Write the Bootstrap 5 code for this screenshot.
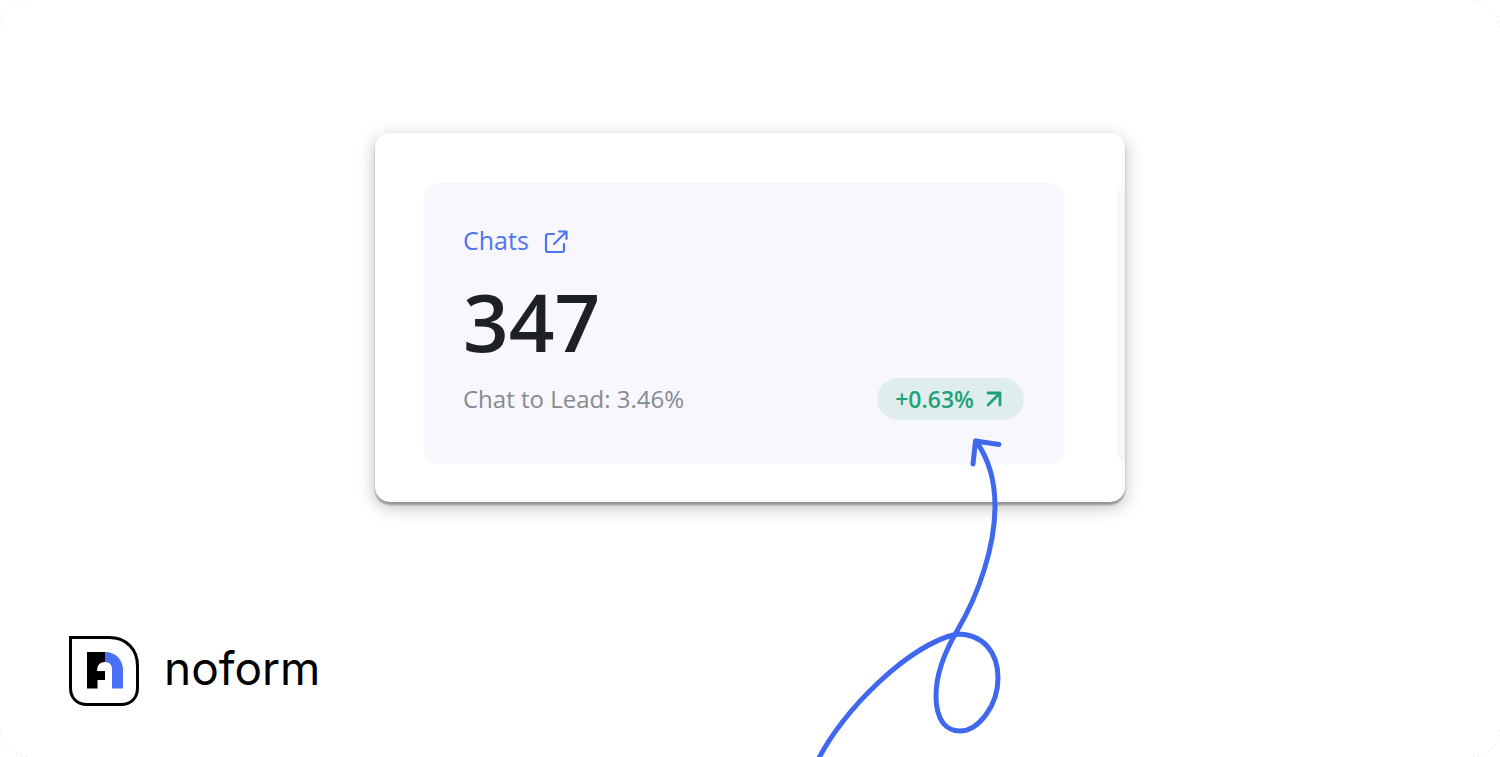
<!DOCTYPE html>
<html lang="en">
<head>
<meta charset="utf-8">
<meta name="viewport" content="width=device-width, initial-scale=1">
<title>noform – Chats</title>
<link href="https://cdn.jsdelivr.net/npm/bootstrap@5.3.0/dist/css/bootstrap.min.css" rel="stylesheet">
<style>
  body { font-family: "Open Sans", "Noto Sans", sans-serif; background: #fff; }
  .stage { padding-top: 133px; padding-bottom: 51px; }
  .panel { border-radius: 15px; padding: 50px 0 38px 49px; gap: 53px;
    box-shadow: 0 3px 2px rgba(0,0,0,.3), 0 5px 18px rgba(0,0,0,.26); }
  .tile { background: #f8f7fd; border-radius: 12px; padding: 37px 40px 43px 39px; min-height: 281px; }
  .tile-main { flex: 0 0 calc(100% - 61px); }
  .chats { color: #4f74f4; font-size: 25px; line-height: 40px; gap: 15px; }
  .count { color: #1d2124; font-size: 80px; line-height: 90px; font-weight: 600; }
  .tile-foot { margin-top: 12px; }
  .ratio-text { color: #868a90; font-size: 24px; line-height: 42px; }
  .trend { background: #dfeeec; color: #22a179; font-size: 23px; line-height: 42px; font-weight: 600; padding: 0 22px 0 18px; gap: 12px; }
  .brand { gap: 25px; padding-left: 69px; }
  .brand-name { font-family: Inter, "Open Sans", sans-serif; font-size: 46px; line-height: 60px; padding-bottom: 6px; color: #000; }
  .squiggle { left: 54%; bottom: 0; pointer-events: none; }
  .edge { width: 27px; height: 27px; }
</style>
</head>
<body>
<main class="stage position-relative min-vh-100 d-flex flex-column overflow-hidden">
  <section class="panel w-50 mx-auto d-flex overflow-hidden bg-white">
    <article class="tile tile-main d-flex flex-column">
      <a class="chats d-flex align-items-center text-decoration-none align-self-start" href="#chats">
        <span>Chats</span>
        <svg class="mt-1" width="24" height="24" viewBox="0 0 24 24" fill="none" stroke="currentColor" stroke-width="2.200" stroke-linecap="round" stroke-linejoin="round" aria-hidden="true"><path d="M10 4H4Q2 4 2 6v14Q2 22 4 22h14Q20 22 20 20v-6M15 1.500h7.500V9M22 2 10 14"/></svg>
      </a>
      <div class="count mt-3">347</div>
      <div class="tile-foot d-flex justify-content-between">
        <span class="ratio-text">Chat to Lead: 3.46%</span>
        <span class="trend rounded-pill d-flex align-items-center">
          <span>+0.63%</span>
          <svg width="16" height="16" viewBox="0 0 16 16" fill="none" stroke="currentColor" stroke-width="2.800" stroke-linecap="round" stroke-linejoin="round" aria-hidden="true"><path d="M2 2h12v12M14 2 2 14"/></svg>
        </span>
      </div>
    </article>
    <div class="tile flex-shrink-0" aria-hidden="true"></div>
  </section>

  <footer class="brand d-flex align-items-center mt-auto">
    <svg width="70" height="70" viewBox="0 0 70 70" aria-hidden="true">
      <path d="M1.500 1.500H40C57 1.500 68.500 13 68.500 30V52C68.500 62 62 68.500 52 68.500H18C8 68.500 1.500 62 1.500 52Z" fill="#fff" stroke="#000" stroke-width="3"/>
      <path d="M18 16H36V26Q28 26 28 35H36V44H28.500V52.500H18Z"/>
      <path d="M36 16C47 16 54 24 54 34V52.500H43V34Q43 26 36 26Z" fill="#4970f6"/>
    </svg>
    <span class="brand-name">noform</span>
  </footer>

  <svg class="squiggle position-absolute" width="200" height="327" viewBox="810 430 200 327" fill="none" stroke="#3f68ee" stroke-width="5" stroke-linecap="round" stroke-linejoin="round" aria-hidden="true">
    <path d="M817 762C842 710 910 644 957 634C983 634 998 652 998 678C998 706 978 731 960 731C953 731 947 728 943 723C938 716 936 706 936 696C936 675 944 653 957 631C979 594 995 546 995 506C995 481 988 458 976 441M973 464L975.500 441L999 444.500"/>
  </svg>

  <svg class="edge position-absolute top-0 start-0" viewBox="0 0 27 27" fill="none" stroke="#ddd" stroke-dasharray="1 4" aria-hidden="true"><path d="M.5 27A26.500 26.500 0 0 1 27 .5"/></svg>
  <svg class="edge position-absolute top-0 end-0" viewBox="0 0 27 27" fill="none" stroke="#ddd" stroke-dasharray="1 4" aria-hidden="true"><path d="M0 .5A26.500 26.500 0 0 1 26.500 27"/></svg>
  <svg class="edge position-absolute bottom-0 start-0" viewBox="0 0 27 27" fill="none" stroke="#ddd" stroke-dasharray="1 4" aria-hidden="true"><path d="M.5 0A26.500 26.500 0 0 0 27 26.500"/></svg>
  <svg class="edge position-absolute bottom-0 end-0" viewBox="0 0 27 27" fill="none" stroke="#ddd" stroke-dasharray="1 4" aria-hidden="true"><path d="M26.500 0A26.500 26.500 0 0 1 0 26.500"/></svg>
</main>
<script src="https://cdn.jsdelivr.net/npm/bootstrap@5.3.0/dist/js/bootstrap.bundle.min.js"></script>
</body>
</html>
